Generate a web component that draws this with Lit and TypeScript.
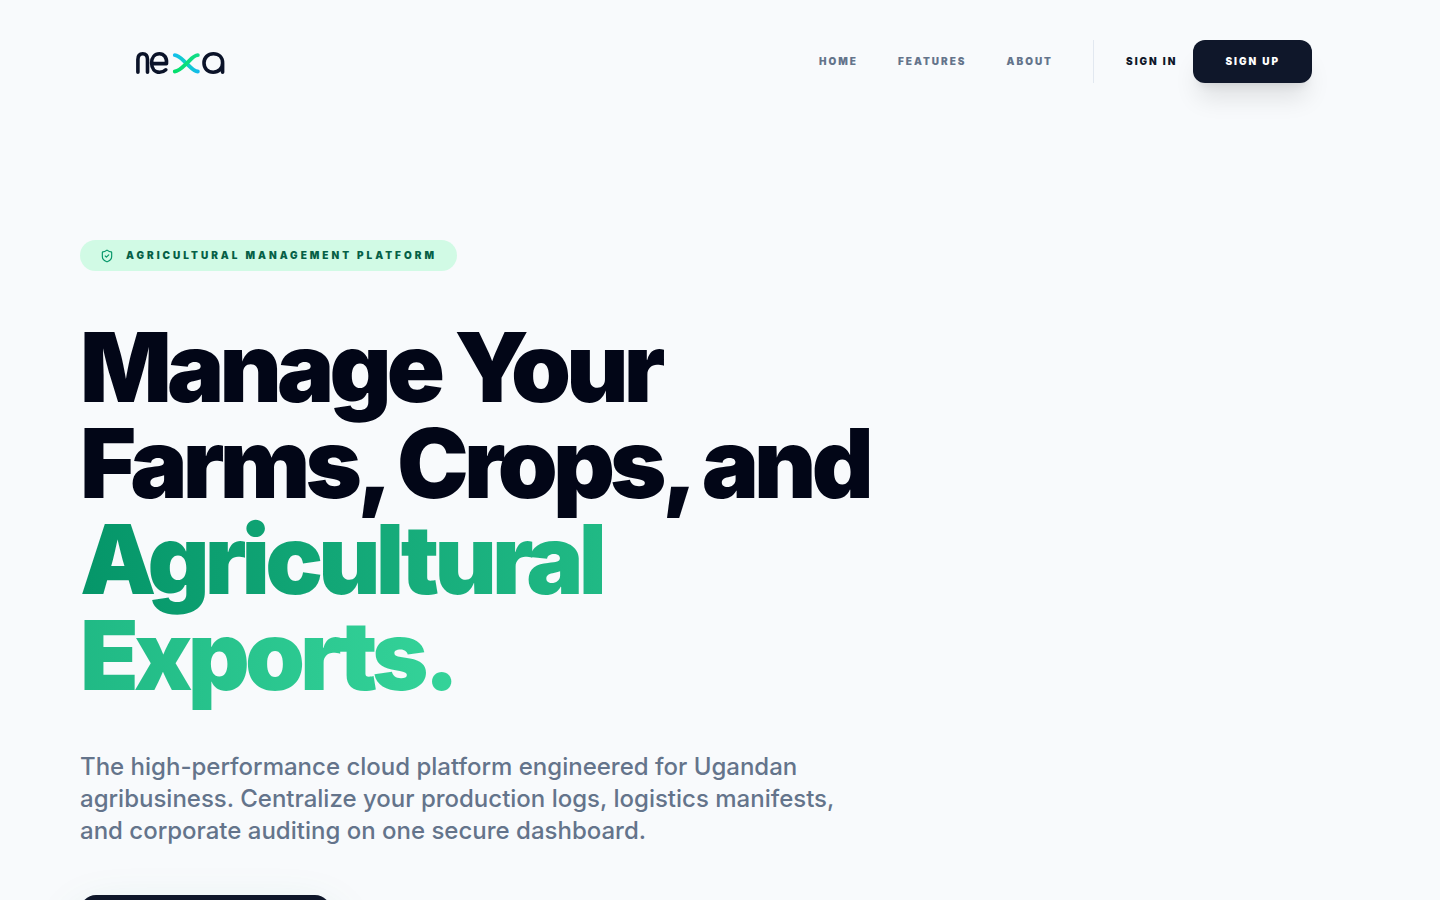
import { LitElement, html, css } from "lit";
import { customElement } from "lit/decorators.js";

@customElement("nexa-logo")
export class NexaLogo extends LitElement {
  static styles = css`
    :host {
      display: block;
    }
    .mark {
      display: block;
      width: 92px;
      height: 26px;
    }
  `;

  render() {
    return html`
      <svg class="mark" viewBox="0 0 92 26" fill="none" stroke-linecap="round" stroke-linejoin="round" role="img" aria-label="nexa">
        <defs>
          <linearGradient id="blue" x1="37" y1="0" x2="63" y2="0" gradientUnits="userSpaceOnUse">
            <stop offset="0" stop-color="#14bdf0" />
            <stop offset="0.5" stop-color="#10cfc4" />
            <stop offset="1" stop-color="#12b8ee" />
          </linearGradient>
          <linearGradient id="green" x1="37" y1="0" x2="63" y2="0" gradientUnits="userSpaceOnUse">
            <stop offset="0" stop-color="#04df6b" />
            <stop offset="1" stop-color="#12dd8a" />
          </linearGradient>
        </defs>
        <g stroke="#0b1329" stroke-width="3.6">
          <path d="M1.900 23.200V10.600C1.900 6.600 3.800 4.800 6.700 4.800s4.800 1.800 4.800 5.800v12.600" />
          <path d="M16.600 14.600H30.500C31.100 8.600 28 4.800 23.400 4.800c-4.600 0-7.800 3.700-7.800 9.200 0 5.600 3.200 9.200 8 9.200 2.700 0 4.700-.900 6.200-2.400" />
          <path d="M86.600 23.300V14C86.600 8.300 82.900 4.800 77.400 4.800S68 8.500 68 14s3.800 9.200 9.200 9.200 9.400-3.700 9.400-9.200" />
        </g>
        <path stroke="url(#blue)" stroke-width="3.900" d="M38.800 6.100c4 .2 7.300 4.200 11.400 8S57.600 22.300 61.800 22.500" />
        <path stroke="url(#green)" stroke-width="3.900" d="M38.800 22.500c4.300-.2 8-4.500 11.900-8.200S57.600 6.300 61.800 6.100" />
      </svg>
    `;
  }
}

@customElement("app-root")
export class AppRoot extends LitElement {
  static styles = css`
    :host {
      display: block;
      min-height: 100vh;
      background: #f8fafc;
      color: #020617;
      font-family: Inter, "Liberation Sans", sans-serif;
    }
    * {
      box-sizing: border-box;
    }
    a {
      color: inherit;
      text-decoration: none;
    }
    .header {
      display: flex;
      align-items: center;
      justify-content: space-between;
      padding: 40px 128px 0 136px;
    }
    .nav,
    .account {
      display: flex;
      align-items: center;
    }
    .nav {
      gap: 40px;
      font-size: 10px;
      line-height: 15px;
      font-weight: 900;
      letter-spacing: 2px;
      text-transform: uppercase;
      color: #64748b;
    }
    .account {
      gap: 16px;
      padding-left: 32px;
      border-left: 1px solid #e2e8f0;
      color: #0f172a;
    }
    .signup {
      padding: 14px 32px;
      border-radius: 12px;
      background: #0f172a;
      color: #fff;
      box-shadow: 0 20px 25px -5px rgb(0 0 0 / 0.1), 0 8px 10px -6px rgb(0 0 0 / 0.1);
    }
    .hero {
      display: flex;
      flex-direction: column;
      align-items: flex-start;
      gap: 48px;
      max-width: 1440px;
      padding: 157px 80px 80px;
    }
    .badge {
      display: flex;
      align-items: center;
      gap: 12px;
      padding: 8px 20px;
      border-radius: 999px;
      background: #d1fae5;
      color: #065f46;
      font-size: 10px;
      line-height: 15px;
      font-weight: 900;
      letter-spacing: 3px;
      text-transform: uppercase;
    }
    .shield {
      width: 14px;
      height: 14px;
      color: #059669;
    }
    .title {
      max-width: 840px;
      margin: 0;
      font-size: 96px;
      line-height: 96px;
      font-weight: 900;
      letter-spacing: -0.05em;
    }
    .accent {
      background: linear-gradient(to right, #059669, #34d399);
      -webkit-background-clip: text;
      background-clip: text;
      color: transparent;
    }
    .lead {
      max-width: 768px;
      margin: 0;
      color: #64748b;
      font-size: 24px;
      line-height: 32px;
      font-weight: 500;
    }
    .cta {
      min-width: 251px;
      padding: 24px 40px;
      border: 0;
      border-radius: 16px;
      background: #0f172a;
      color: #fff;
      font: inherit;
      font-size: 14px;
      line-height: 20px;
      font-weight: 900;
      box-shadow: 0 20px 50px rgb(5 150 105 / 0.15);
    }
  `;

  render() {
    return html`
      <header class="header">
        <a href="#"><nexa-logo></nexa-logo></a>
        <nav class="nav">
          <a href="#home">Home</a>
          <a href="#features">Features</a>
          <a href="#about">About</a>
          <div class="account">
            <a href="#signin">Sign In</a>
            <a class="signup" href="#signup">Sign Up</a>
          </div>
        </nav>
      </header>
      <main class="hero">
        <div class="badge">
          <svg class="shield" viewBox="0 0 24 24" fill="none" stroke="currentColor" stroke-width="2" stroke-linecap="round" stroke-linejoin="round" aria-hidden="true">
            <path d="M20 13c0 5-3.500 7.500-7.660 8.950a1 1 0 0 1-.670-.010C7.500 20.500 4 18 4 13V6a1 1 0 0 1 1-1c2 0 4.500-1.200 6.240-2.720a1.170 1.170 0 0 1 1.520 0C14.510 3.810 17 5 19 5a1 1 0 0 1 1 1z" />
            <path d="m9 12 2 2 4-4" />
          </svg>
          <span>Agricultural Management Platform</span>
        </div>
        <h1 class="title">
          Manage Your<br />Farms, Crops, and
          <span class="accent">Agricultural Exports.</span>
        </h1>
        <p class="lead">
          The high-performance cloud platform engineered for Ugandan
          agribusiness. Centralize your production logs, logistics manifests,
          and corporate auditing on one secure dashboard.
        </p>
        <button class="cta" type="button">Get Started</button>
      </main>
    `;
  }
}
